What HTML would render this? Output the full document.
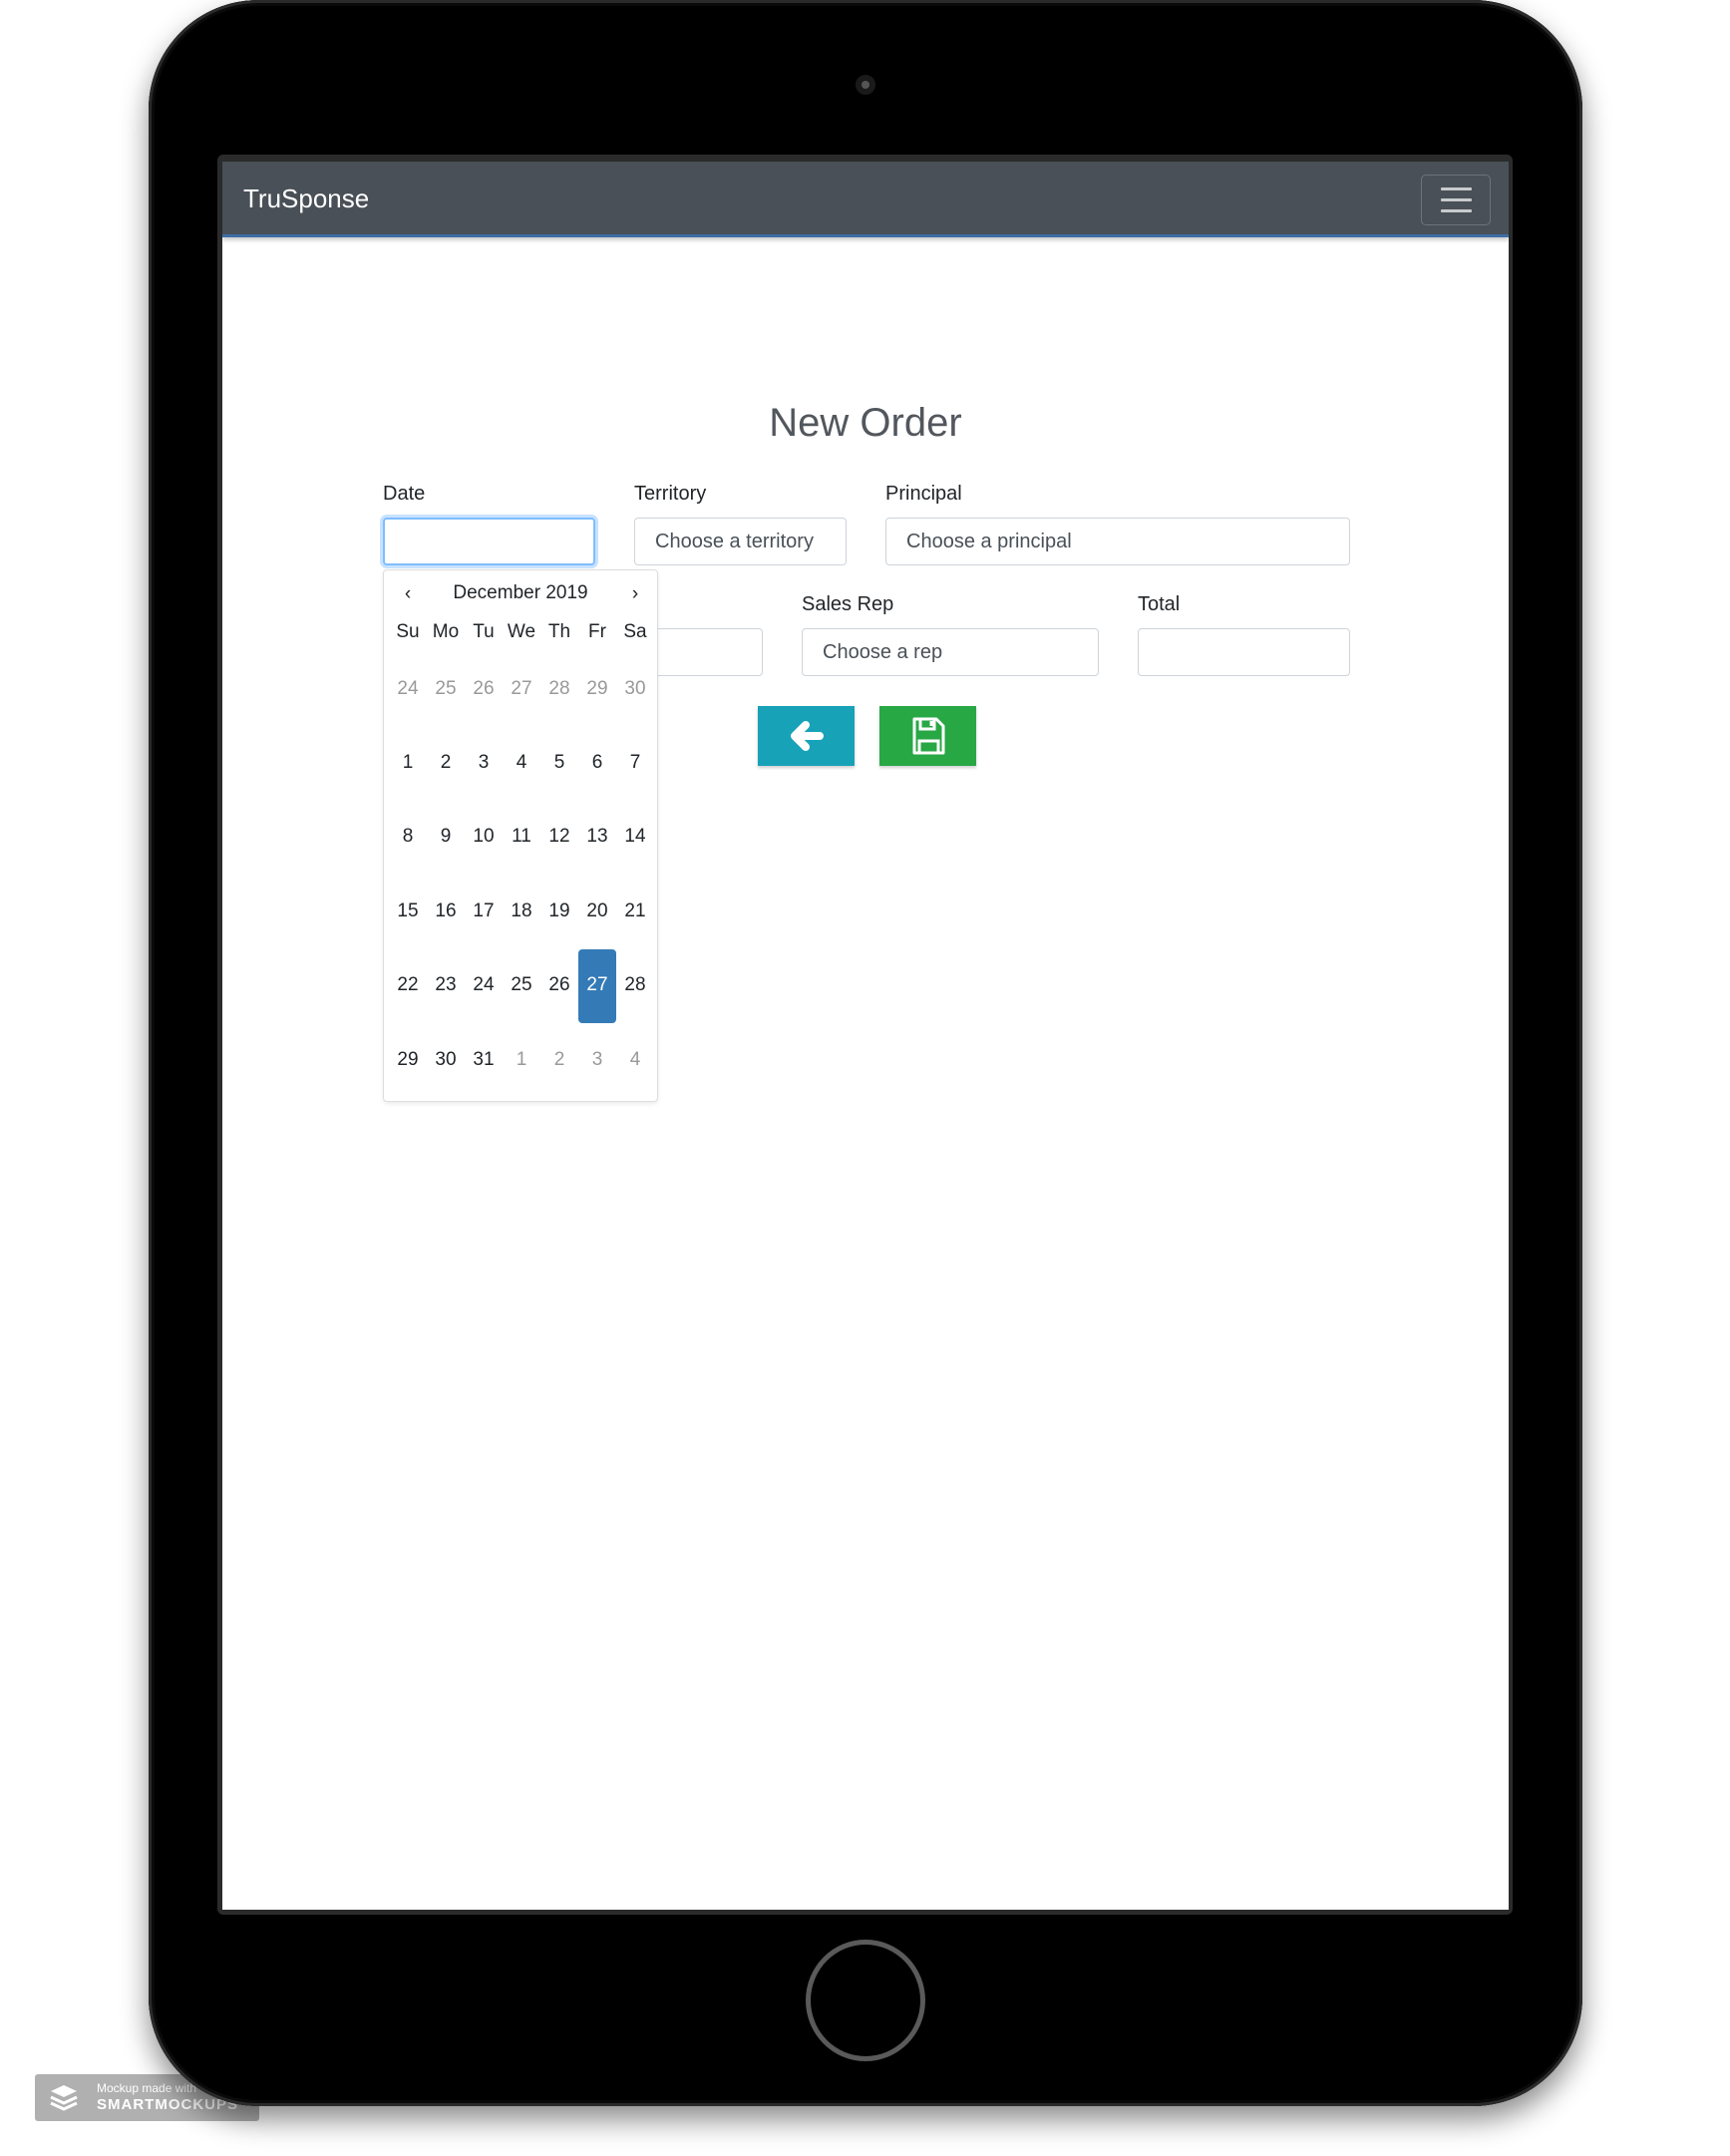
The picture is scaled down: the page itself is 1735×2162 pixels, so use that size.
<!DOCTYPE html>
<html><head><meta charset="utf-8"><style>
*{box-sizing:border-box;margin:0;padding:0}
body{width:1735px;height:2162px;background:#fff;position:relative;overflow:hidden;font-family:"Liberation Sans",sans-serif}
.abs{position:absolute}
.tablet{left:149px;top:0;width:1438px;height:2112px;background:#000;border-radius:110px;box-shadow:0 14px 28px rgba(0,0,0,.45), inset 0 0 0 3px #2a2a2a, inset 0 0 0 6px #0a0a0a}
.bezel{left:218px;top:155px;width:1299px;height:1765px;background:#2b2b2b;border-radius:6px}
.screen{left:223px;top:162px;width:1290px;height:1753px;background:#fff;overflow:hidden}
.nav{left:0;top:0;width:1290px;height:76px;background:#495057;border-bottom:3px solid #3d6da6;box-shadow:0 3px 4px rgba(0,0,0,.2)}
.brand{left:21px;top:22px;color:#fff;font-size:26px}
.burger{left:1202px;top:13px;width:70px;height:51px;border:1px solid #6c737a;border-radius:5px}
.burger i{position:absolute;left:19px;width:31px;height:3px;background:#c8cbce;border-radius:1px}
.lbl{font-size:20px;color:#212529}
.inp{border:1px solid #ced4da;border-radius:4px;height:48px;background:#fff;font-size:20px;color:#495057;padding:12px 0 0 20px;white-space:nowrap;overflow:hidden}
.cal{left:161px;top:409px;width:276px;height:534px;background:#fff;border:1px solid #ddd;border-radius:4px;box-shadow:0 2px 4px rgba(0,0,0,.08)}
.c{position:absolute;width:38px;text-align:center;font-size:19px;color:#212529;transform:translateY(-50%)}
.g{color:#999}
</style></head><body>
<div class="abs" style="left:35px;top:2080px;width:225px;height:47px;background:rgba(150,150,150,.75);border-radius:3px;color:#fff">
 <svg class="abs" style="left:14px;top:10px" width="30" height="28" viewBox="0 0 30 28"><path d="M15 1L28 7L15 13L2 7z" fill="#fff"/><path d="M2 13L15 19L28 13M2 19L15 25L28 19" stroke="#fff" stroke-width="3" fill="none"/></svg>
 <div class="abs" style="left:62px;top:7px;font-size:12px">Mockup made with</div>
 <div class="abs" style="left:62px;top:22px;font-size:15px;font-weight:bold;letter-spacing:1px">SMARTMOCKUPS</div>
</div>
<div class="abs tablet"></div>
<div class="abs" style="left:858px;top:75px;width:20px;height:20px;border-radius:50%;background:#1a1a1a"><div style="position:absolute;left:6px;top:6px;width:8px;height:8px;border-radius:50%;background:#555"></div></div>
<div class="abs" style="left:808px;top:1945px;width:120px;height:122px;border-radius:50%;border:5px solid #5a5a5a"></div>
<div class="abs bezel"></div>
<div class="abs screen">
 <div class="abs nav">
  <div class="abs brand">TruSponse</div>
  <div class="abs burger"><i style="top:12px"></i><i style="top:23px"></i><i style="top:34px"></i></div>
 </div>
 <div class="abs" style="left:0;width:1290px;top:240px;text-align:center;font-size:40px;color:#52575d">New Order</div>
 <div class="abs lbl" style="left:161px;top:322px">Date</div>
 <div class="abs lbl" style="left:413px;top:322px">Territory</div>
 <div class="abs lbl" style="left:665px;top:322px">Principal</div>
 <div class="abs inp" style="left:161px;top:357px;width:213px;border:2px solid #80bdff;box-shadow:0 0 0 3px rgba(0,123,255,.22)"></div>
 <div class="abs inp" style="left:413px;top:357px;width:213px">Choose a territory</div>
 <div class="abs inp" style="left:665px;top:357px;width:466px">Choose a principal</div>
 <div class="abs lbl" style="left:581px;top:433px">Sales Rep</div>
 <div class="abs lbl" style="left:918px;top:433px">Total</div>
 <div class="abs inp" style="left:161px;top:468px;width:381px"></div>
 <div class="abs inp" style="left:581px;top:468px;width:298px">Choose a rep</div>
 <div class="abs inp" style="left:918px;top:468px;width:213px"></div>
 <div class="abs" style="left:537px;top:546px;width:97px;height:60px;background:#17a2b8;box-shadow:0 2px 3px rgba(0,0,0,.2)">
  <svg width="97" height="60" viewBox="0 0 97 60"><path d="M62 30H38M48 19L37 30L48 41" stroke="#fff" stroke-width="8" fill="none" stroke-linecap="round" stroke-linejoin="round"/></svg></div>
 <div class="abs" style="left:659px;top:546px;width:97px;height:60px;background:#28a745;box-shadow:0 2px 3px rgba(0,0,0,.2)">
  <svg width="97" height="60" viewBox="0 0 97 60"><path d="M35 13h22l7 7v27H35z" stroke="#fff" stroke-width="3" fill="none" stroke-linejoin="round"/><path d="M41 13v10h14V13M52 15v5M40 47V35h19v12" stroke="#fff" stroke-width="3" fill="none"/></svg></div>
 <div class="abs cal">
  <div class="c" style="left:5px;top:24px">‹</div>
  <div class="abs" style="left:0;width:274px;top:12px;text-align:center;font-size:19px;color:#212529">December 2019</div>
  <div class="c" style="left:233px;top:24px">›</div>
  <div class="abs" style="left:195px;top:380px;width:38px;height:74px;background:#337ab7;border-radius:4px"></div>
  <div id="g"></div>
 </div>
</div>
<script>
var cols=[5,43,81,119,157,195,233],rows=[62,119,193,267,342,416,491];
var h=["Su","Mo","Tu","We","Th","Fr","Sa"];
var d=[[24,25,26,27,28,29,30],[1,2,3,4,5,6,7],[8,9,10,11,12,13,14],[15,16,17,18,19,20,21],[22,23,24,25,26,27,28],[29,30,31,1,2,3,4]];
var s="";
h.forEach(function(t,i){s+='<div class="c" style="left:'+cols[i]+'px;top:'+rows[0]+'px">'+t+'</div>';});
d.forEach(function(r,ri){r.forEach(function(t,i){var gr=(ri==0)||(ri==5&&i>2);var sel=(ri==4&&i==5);
s+='<div class="c'+(gr?' g':'')+'" style="left:'+cols[i]+'px;top:'+rows[ri+1]+'px;'+(sel?'color:#fff':'')+'">'+t+'</div>';});});
document.getElementById("g").outerHTML=s;
</script>
</body></html>
